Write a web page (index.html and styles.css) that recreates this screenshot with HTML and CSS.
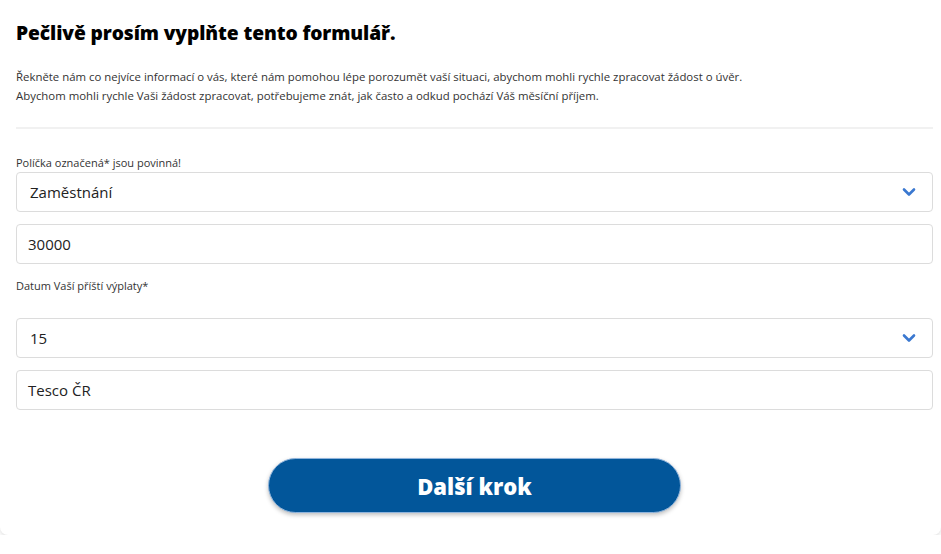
FILE: index.html
```html
<!DOCTYPE html>
<html lang="cs">
<head>
<meta charset="utf-8">
<title>Formulář</title>
<link rel="stylesheet" href="styles.css">
</head>
<body>
<div class="card">
  <h1 class="title">Pečlivě prosím vyplňte tento formulář.</h1>
  <p class="intro">Řekněte nám co nejvíce informací o vás, které nám pomohou lépe porozumět vaší situaci, abychom mohli rychle zpracovat žádost o úvěr.<br>Abychom mohli rychle Vaši žádost zpracovat, potřebujeme znát, jak často a odkud pochází Váš měsíční příjem.</p>
  <hr class="divider">
  <div class="label">Políčka označená* jsou povinná!</div>
  <div class="field select"><span>Zaměstnání</span>
    <svg class="chev" width="14" height="10" viewBox="0 0 14 10"><path d="M2 2.5 L7 7.5 L12 2.5" fill="none" stroke="#3a78d0" stroke-width="2.6" stroke-linecap="round" stroke-linejoin="round"/></svg>
  </div>
  <div class="field input">30000</div>
  <div class="label label-date">Datum Vaší příští výplaty*</div>
  <div class="field select"><span>15</span>
    <svg class="chev" width="14" height="10" viewBox="0 0 14 10"><path d="M2 2.5 L7 7.5 L12 2.5" fill="none" stroke="#3a78d0" stroke-width="2.6" stroke-linecap="round" stroke-linejoin="round"/></svg>
  </div>
  <div class="field input">Tesco ČR</div>
  <div class="actions"><button class="btn">Další krok</button></div>
</div>
</body>
</html>
```
FILE: styles.css
```css
html, body {
  margin: 0;
  padding: 0;
  background: #ffffff;
}
body {
  font-family: "Open Sans", "Noto Sans", sans-serif;
  color: #222;
}
.card {
  width: 941px;
  height: 535px;
  box-sizing: border-box;
  padding: 21px 8px 0 16px;
  background: #fff;
  border-radius: 0 0 8px 8px;
  box-shadow: 0 2px 4px rgba(0,0,0,0.12);
}
.title {
  margin: 0;
  font-size: 19.2px;
  line-height: 24px;
  font-weight: 800;
  color: #000;
  letter-spacing: -0.1px;
}
.intro {
  margin: 22px 0 0;
  font-size: 11.4px;
  line-height: 19px;
  color: #333;
}
.divider {
  margin: 22px 0 0;
  border: 0;
  border-top: 2px solid #f1f1f1;
}
.label {
  margin-top: 26px;
  font-size: 11px;
  line-height: 16px;
  color: #333;
}
.label-date {
  margin-top: 14px;
  margin-bottom: 24px;
}
.field {
  height: 40px;
  box-sizing: border-box;
  border: 1px solid #dcdcdc;
  border-radius: 4px;
  display: flex;
  align-items: center;
  justify-content: space-between;
  font-size: 15px;
  color: #222;
  margin-top: 12px;
}
.label + .field { margin-top: 1px; }
.label-date + .field { margin-top: 0; }
.select { padding: 0 16px 0 13px; }
.input { padding: 0 11px; }
.chev { display: block; }
.actions {
  display: flex;
  justify-content: center;
  margin-top: 48px;
}
.btn {
  box-sizing: border-box;
  width: 413px;
  height: 55px;
  border-radius: 28px;
  background: #02569a;
  border: 1px solid #8fb4dc;
  box-shadow: 0 2px 4px rgba(0,0,0,0.25);
  color: #fff;
  font-family: "Open Sans", "Noto Sans", sans-serif;
  font-weight: 800;
  font-size: 22px;
  cursor: pointer;
}
```
